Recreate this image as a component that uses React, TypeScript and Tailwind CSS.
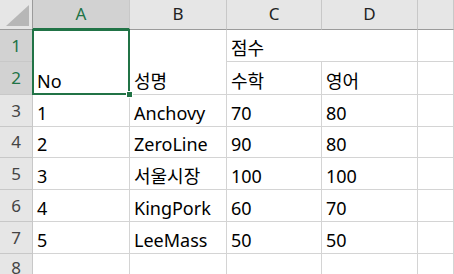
const font = { fontFamily: '"Noto Sans", "Noto Sans CJK KR", sans-serif' };

const cols = ['A', 'B', 'C', 'D', ''];

const rows: string[][] = [
  ['1', 'Anchovy', '70', '80'],
  ['2', 'ZeroLine', '90', '80'],
  ['3', '서울시장', '100', '100'],
  ['4', 'KingPork', '60', '70'],
  ['5', 'LeeMass', '50', '50'],
];

function Cell({ children, className = '' }: { children?: React.ReactNode; className?: string }) {
  return (
    <div className={`flex items-end border-r border-b border-[#d4d4d4] bg-white pl-[4px] pb-[4px] text-[18px] leading-none text-black ${className}`}>
      {children}
    </div>
  );
}

function RowHead({ n, active = false, top = false }: { n: number | string; active?: boolean; top?: boolean }) {
  return (
    <div
      className={`flex justify-center border-r border-b border-[#c8c8c8] text-[17px] ${top ? 'items-start pt-[1px]' : 'items-center'} ${
        active ? 'bg-[#d2d2d2] text-[#217346]' : 'bg-[#e6e6e6] text-[#444]'
      }`}
    >
      {n}
    </div>
  );
}

export default function App() {
  return (
    <div className="h-[274px] w-[454px] overflow-hidden bg-white" style={font}>
      <div className="grid grid-cols-[33px_97px_97px_95px_96px_1fr] grid-rows-[30px_32px_33px_32px_31px_32px_32px_32px_40px]">
        {/* corner */}
        <div className="relative border-r border-b border-[#9b9b9b] bg-[#e6e6e6]">
          <svg className="absolute right-[3px] bottom-[3px]" width="23" height="21" viewBox="0 0 23 21">
            <polygon points="23,0 23,21 0,21" fill="#b7b7b7" />
          </svg>
        </div>
        {cols.map((c, i) => (
          <div
            key={i}
            className={`flex items-center justify-center border-r border-[#c8c8c8] pb-[1px] text-[17px] ${
              i === 0
                ? 'border-b-2 border-b-[#217346] bg-[#d2d2d2] text-[#217346]'
                : 'border-b border-b-[#9b9b9b] bg-[#e6e6e6] text-[#222]'
            }`}
          >
            {c}
          </div>
        ))}

        {/* rows 1-2 with merged headers */}
        <RowHead n={1} active />
        <div className="relative row-span-2 flex items-end border-r border-b border-[#d4d4d4] bg-white pb-[4px] pl-[4px] text-[18px] leading-none">
          No
          <div className="absolute -top-[1px] -left-[1px] -right-[1px] -bottom-[1px] border-2 border-[#217346]" />
          <div className="absolute -right-[4px] -bottom-[4px] h-[7px] w-[7px] border border-white bg-[#217346]" />
        </div>
        <Cell className="row-span-2">성명</Cell>
        <Cell className="col-span-2">점수</Cell>
        <Cell />
        <RowHead n={2} active />
        <Cell>수학</Cell>
        <Cell>영어</Cell>
        <Cell />

        {rows.map((r, i) => (
          <Row key={i} n={i + 3} cells={r} />
        ))}
        <Row n={8} cells={['', '', '', '']} top />
      </div>
    </div>
  );
}

function Row({ n, cells, top = false }: { n: number; cells: string[]; top?: boolean }) {
  return (
    <>
      <RowHead n={n} top={top} />
      {cells.map((c, j) => (
        <Cell key={j}>{c}</Cell>
      ))}
      <Cell />
    </>
  );
}
